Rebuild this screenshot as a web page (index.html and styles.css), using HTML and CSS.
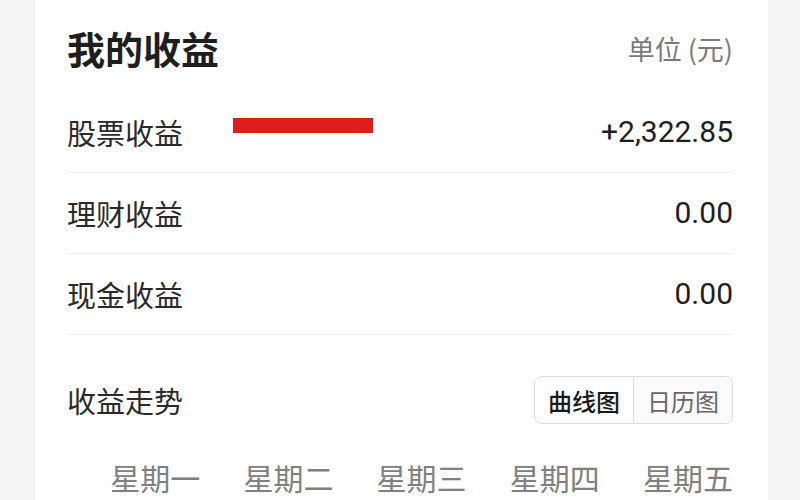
FILE: index.html
```html
<!DOCTYPE html>
<html lang="zh-CN">
<head>
<meta charset="utf-8">
<title>我的收益</title>
<link rel="stylesheet" href="styles.css">
</head>
<body>
<div class="card">
  <div class="header">
    <div class="title">我的收益</div>
    <div class="unit">单位 (元)</div>
  </div>
  <div class="row">
    <div class="label">股票收益</div>
    <div class="mask"></div>
    <div class="value">+2,322.85</div>
  </div>
  <div class="row">
    <div class="label">理财收益</div>
    <div class="value">0.00</div>
  </div>
  <div class="row">
    <div class="label">现金收益</div>
    <div class="value">0.00</div>
  </div>
  <div class="trend">
    <div class="label">收益走势</div>
    <div class="seg">
      <div class="seg-item active">曲线图</div>
      <div class="seg-item">日历图</div>
    </div>
  </div>
  <div class="days">
    <div class="day">星期一</div>
    <div class="day">星期二</div>
    <div class="day">星期三</div>
    <div class="day">星期四</div>
    <div class="day">星期五</div>
  </div>
</div>
</body>
</html>
```

FILE: styles.css
```css
html, body {
  margin: 0;
  padding: 0;
  background: #f5f5f5;
  font-family: "Noto Sans CJK SC", "Noto Sans", sans-serif;
  color: #222;
}
.card {
  margin-left: 35px;
  width: 666px;
  height: 500px;
  padding: 0 35px 0 32px;
  background: #fff;
  overflow: hidden;
}
.header {
  height: 92px;
  padding-top: 4px;
  box-sizing: border-box;
  display: flex;
  align-items: center;
  justify-content: space-between;
}
.title {
  font-size: 38px;
  font-weight: 700;
  color: #1e1e1e;
  line-height: 1;
}
.unit {
  font-size: 27px;
  color: #7a7a7a;
  line-height: 1;
}
.row {
  height: 80px;
  border-bottom: 1px solid #f0f0f0;
  display: flex;
  align-items: center;
}
.label {
  font-size: 29px;
  color: #2a2a2a;
  line-height: 1;
}
.mask {
  align-self: flex-start;
  margin-top: 26px;
  margin-left: 50px;
  width: 140px;
  height: 15px;
  background: #df1f1f;
}
.value {
  margin-left: auto;
  font-family: Roboto, "Noto Sans", sans-serif;
  font-size: 30px;
  color: #1e1e1e;
  line-height: 1;
}
.trend {
  margin-top: 41px;
  height: 48px;
  display: flex;
  align-items: center;
  justify-content: space-between;
}
.seg {
  display: flex;
  height: 48px;
  border: 1px solid #dcdcdc;
  border-radius: 8px;
  box-sizing: border-box;
  overflow: hidden;
}
.seg-item {
  width: 98px;
  display: flex;
  align-items: center;
  justify-content: center;
  font-size: 24px;
  color: #666;
  background: #fbfbfb;
}
.seg-item.active {
  color: #1a1a1a;
  background: #fff;
  border-right: 1px solid #dcdcdc;
  font-weight: 500;
}
.days {
  margin-top: 36px;
  display: grid;
  grid-template-columns: repeat(5, 1fr);
}
.day {
  text-align: right;
  font-size: 30px;
  line-height: 34px;
  color: #808080;
}
```
